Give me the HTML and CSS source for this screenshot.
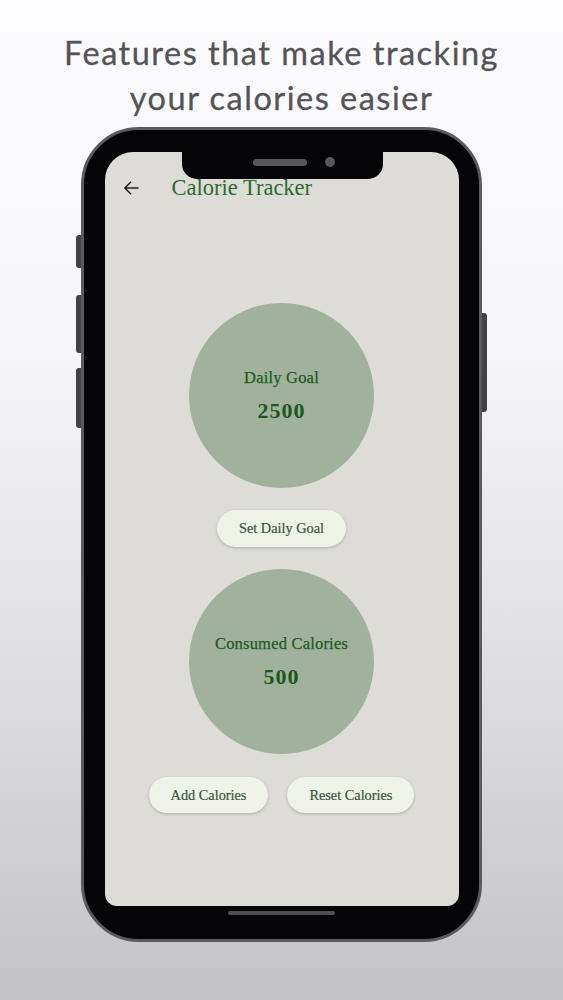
FILE: index.html
```html
<!DOCTYPE html>
<html lang="en">
<head>
<meta charset="utf-8">
<title>Calorie Tracker</title>
<link rel="stylesheet" href="styles.css">
</head>
<body>
<div class="page">
  <h1 class="headline">Features that make tracking<br>your calories easier</h1>
  <div class="phone">
    <span class="side-btn left b1"></span>
    <span class="side-btn left b2"></span>
    <span class="side-btn left b3"></span>
    <span class="side-btn right b4"></span>
    <div class="notch">
      <span class="speaker"></span>
      <span class="camera"></span>
    </div>
    <div class="screen">
      <div class="app-bar">
        <svg class="back" width="16" height="14" viewBox="0 0 16 14" aria-hidden="true">
          <path d="M15 7H1.8M7.6 1.2L1.8 7l5.8 5.8" fill="none" stroke="#222" stroke-width="1.6" stroke-linecap="round" stroke-linejoin="round"/>
        </svg>
        <span class="title">Calorie Tracker</span>
      </div>
      <div class="content">
        <div class="circle">
          <span class="label">Daily Goal</span>
          <span class="value">2500</span>
        </div>
        <button class="pill">Set Daily Goal</button>
        <div class="circle">
          <span class="label">Consumed Calories</span>
          <span class="value">500</span>
        </div>
        <div class="btn-row">
          <button class="pill add">Add Calories</button>
          <button class="pill reset">Reset Calories</button>
        </div>
      </div>
    </div>
    <span class="home-indicator"></span>
  </div>
</div>
</body>
</html>
```

FILE: styles.css
```css
* { box-sizing: border-box; }
html, body { margin: 0; padding: 0; }
body {
  width: 563px;
  height: 1000px;
  overflow: hidden;
  background: linear-gradient(180deg, #fcfbfd 0%, #f6f5f7 35%, #dcdbde 70%, #c3c2c5 100%);
}
.page {
  display: flex;
  flex-direction: column;
  align-items: center;
  padding-top: 30px;
}
.headline {
  margin: 0;
  font-family: Lato, "Open Sans", sans-serif;
  font-weight: 400;
  font-size: 32.5px;
  line-height: 45px;
  color: #545357;
  text-align: center;
  letter-spacing: 1.5px;
  -webkit-text-stroke: 0.3px #545357;
}
.phone {
  position: relative;
  margin-top: 7px;
  margin-left: -1px;
  width: 401px;
  height: 815px;
  border: 3px solid #5b5a5d;
  border-radius: 58px;
  background: #050406;
  padding: 22px 20px 0 21px;
  display: flex;
  flex-direction: column;
  align-items: center;
}
.side-btn {
  position: absolute;
  width: 5px;
  background: #424144;
}
.side-btn.left { left: -8px; border-radius: 3px 0 0 3px; }
.side-btn.right { right: -8px; border-radius: 0 3px 3px 0; }
.b1 { top: 105px; height: 33px; }
.b2 { top: 165px; height: 58px; }
.b3 { top: 238px; height: 60px; }
.b4 { top: 183px; height: 99px; }
.notch {
  position: absolute;
  top: 0;
  left: 98px;
  width: 201px;
  height: 49px;
  background: #050406;
  border-radius: 0 0 15px 15px;
  z-index: 2;
}
.speaker {
  position: absolute;
  left: 71px;
  top: 29px;
  width: 54px;
  height: 7px;
  border-radius: 4px;
  background: #58575a;
}
.camera {
  position: absolute;
  left: 143px;
  top: 27px;
  width: 10px;
  height: 10px;
  border-radius: 50%;
  background: #58575a;
}
.screen {
  width: 354px;
  height: 754px;
  background: #dddcd8;
  border-radius: 28px 28px 12px 12px;
  display: flex;
  flex-direction: column;
  font-family: "Liberation Serif", "Times New Roman", serif;
}
.app-bar {
  margin-top: 20px;
  height: 32px;
  padding-left: 18px;
  display: flex;
  align-items: center;
  gap: 33px;
}
.back { display: block; flex: none; }
.title {
  font-size: 22.5px;
  color: #2e6a2e;
  line-height: 1;
}
.content {
  padding-top: 99px;
  display: flex;
  flex-direction: column;
  align-items: center;
  gap: 22px;
}
.circle {
  width: 185px;
  height: 185px;
  border-radius: 50%;
  background: #a0b29c;
  display: flex;
  flex-direction: column;
  align-items: center;
  justify-content: center;
  gap: 12px;
}
.label {
  font-size: 16.5px;
  line-height: 18px;
  color: #225a22;
  letter-spacing: 0.2px;
  -webkit-text-stroke: 0.25px #225a22;
}
.value {
  font-size: 22px;
  line-height: 24px;
  font-weight: 700;
  color: #1d571d;
  letter-spacing: 1px;
}
.pill {
  font-family: "Liberation Serif", "Times New Roman", serif;
  font-size: 14.3px;
  color: #36553a;
  -webkit-text-stroke: 0.2px #36553a;
  background: #eef2e8;
  border: none;
  border-radius: 19px;
  height: 37px;
  padding: 0 22px;
  box-shadow: 0 1px 3px rgba(0, 0, 0, 0.22);
  margin: 0;
}
.btn-row {
  margin-top: 1px;
  display: flex;
  gap: 19px;
}
.btn-row .pill { height: 36px; }
.home-indicator {
  margin-top: 5px;
  width: 107px;
  height: 4px;
  border-radius: 2px;
  background: #4f4e51;
}
```
